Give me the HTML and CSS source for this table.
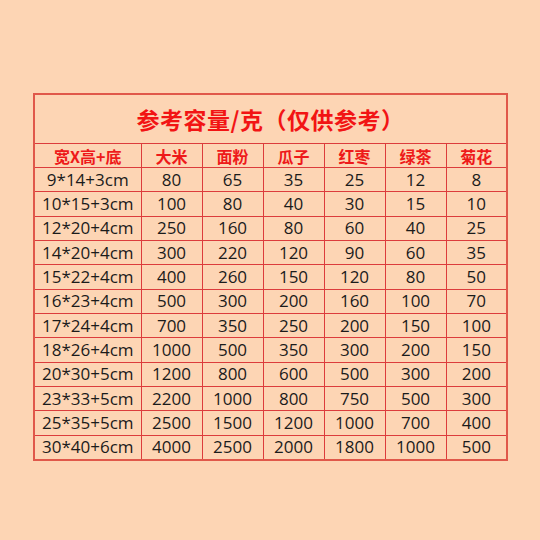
FILE: index.html
```html
<!DOCTYPE html>
<html lang="zh">
<head>
<meta charset="utf-8">
<link rel="stylesheet" href="styles.css">
</head>
<body>
<div class="page">
<table class="cap">
<colgroup>
<col class="c-size"><col class="c-n"><col class="c-n"><col class="c-n"><col class="c-n"><col class="c-n"><col class="c-n">
</colgroup>
<thead>
<tr class="title-row"><th colspan="7">参考容量/克（仅供参考）</th></tr>
<tr class="head-row"><th>宽X高+底</th><th>大米</th><th>面粉</th><th>瓜子</th><th>红枣</th><th>绿茶</th><th>菊花</th></tr>
</thead>
<tbody>
<tr><td>9*14+3cm</td><td>80</td><td>65</td><td>35</td><td>25</td><td>12</td><td>8</td></tr>
<tr><td>10*15+3cm</td><td>100</td><td>80</td><td>40</td><td>30</td><td>15</td><td>10</td></tr>
<tr><td>12*20+4cm</td><td>250</td><td>160</td><td>80</td><td>60</td><td>40</td><td>25</td></tr>
<tr><td>14*20+4cm</td><td>300</td><td>220</td><td>120</td><td>90</td><td>60</td><td>35</td></tr>
<tr><td>15*22+4cm</td><td>400</td><td>260</td><td>150</td><td>120</td><td>80</td><td>50</td></tr>
<tr><td>16*23+4cm</td><td>500</td><td>300</td><td>200</td><td>160</td><td>100</td><td>70</td></tr>
<tr><td>17*24+4cm</td><td>700</td><td>350</td><td>250</td><td>200</td><td>150</td><td>100</td></tr>
<tr><td>18*26+4cm</td><td>1000</td><td>500</td><td>350</td><td>300</td><td>200</td><td>150</td></tr>
<tr><td>20*30+5cm</td><td>1200</td><td>800</td><td>600</td><td>500</td><td>300</td><td>200</td></tr>
<tr><td>23*33+5cm</td><td>2200</td><td>1000</td><td>800</td><td>750</td><td>500</td><td>300</td></tr>
<tr><td>25*35+5cm</td><td>2500</td><td>1500</td><td>1200</td><td>1000</td><td>700</td><td>400</td></tr>
<tr><td>30*40+6cm</td><td>4000</td><td>2500</td><td>2000</td><td>1800</td><td>1000</td><td>500</td></tr>
</tbody>
</table>
</div>
</body>
</html>
```
FILE: styles.css
```css
html, body {
  margin: 0;
  padding: 0;
  background: #fdd5b4;
}
.page {
  width: 540px;
  height: 540px;
  padding: 93px 0 0 33px;
  box-sizing: border-box;
}
.cap {
  border-collapse: collapse;
  table-layout: fixed;
  width: 473px;
  border: 2px solid #e0584a;
  font-family: "Open Sans", "Noto Sans CJK SC", sans-serif;
}
.c-size { width: 107px; }
.c-n { width: 61px; }
.cap th, .cap td {
  border: 1px solid #dc3c3c;
  padding: 0;
  text-align: center;
  vertical-align: middle;
  white-space: nowrap;
}
.title-row th {
  height: 48px;
  color: #f21414;
  font-family: "Noto Sans CJK SC", sans-serif;
  font-weight: 700;
  font-size: 23px;
  letter-spacing: 0.5px;
  line-height: 30px;
}
.head-row th {
  height: 23px;
  color: #ee1a1a;
  font-family: "Noto Sans CJK SC", sans-serif;
  font-weight: 700;
  font-size: 16px;
  line-height: 20px;
}
.cap td {
  height: 23.33px;
  color: #1b1b1b;
  font-size: 17px;
  line-height: 20px;
}
```
